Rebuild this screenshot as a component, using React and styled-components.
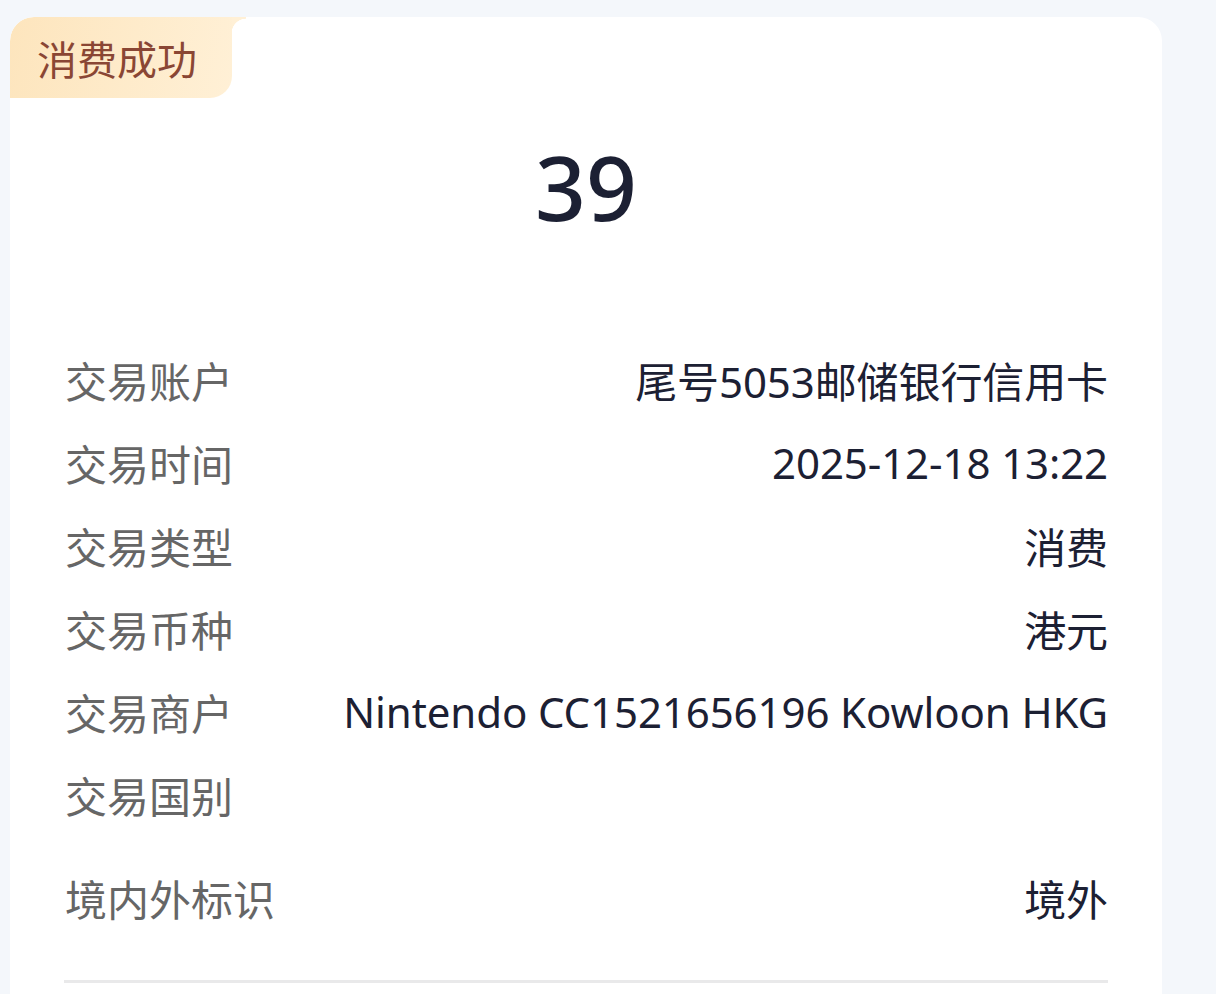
import React from "react";
import styled, { createGlobalStyle } from "styled-components";

const Global = createGlobalStyle`
  html, body { margin: 0; padding: 0; background: #f4f7fb; }
  body { font-family: "Noto Sans", "Noto Sans CJK SC", sans-serif; }
  #root { min-height: 994px; }
`;

const Page = styled.div`
  padding: 17px 54px 0 10px;
  height: 994px;
  overflow: hidden;
  box-sizing: border-box;
`;

const Card = styled.div`
  background: #ffffff;
  border-radius: 24px 24px 0 0;
  width: 1152px;
  height: 1100px;
  overflow: hidden;
  display: flex;
  flex-direction: column;
`;

const Badge = styled.div`
  position: relative;
  width: 222px;
  height: 81px;
  box-sizing: border-box;
  padding-left: 27px;
  display: flex;
  align-items: center;
  background: linear-gradient(100deg, #fde5bd 0%, #fff0d6 100%);
  border-radius: 24px 0 22px 0;
  color: #8a4634;
  font-family: "Noto Sans CJK SC", sans-serif;
  font-size: 40px;
  &::after {
    content: "";
    position: absolute;
    top: 0;
    right: -14px;
    width: 14px;
    height: 16px;
    background: radial-gradient(circle at 100% 100%, transparent 14px, #fff0d6 14.6px);
  }
`;

const Amount = styled.div`
  margin-top: 39px;
  text-align: center;
  font-family: "Noto Sans", sans-serif;
  font-size: 89px;
  font-weight: 500;
  line-height: 100px;
  color: #1c2033;
`;

const List = styled.div`
  margin-top: 101px;
  padding: 0 54px 0 55px;
  display: flex;
  flex-direction: column;
`;

const Row = styled.div`
  display: flex;
  justify-content: space-between;
  align-items: center;
  height: 83px;
  margin-top: ${(p) => (p.$gap ? `${p.$gap}px` : "0")};
`;

const Label = styled.span`
  font-family: "Noto Sans CJK SC", sans-serif;
  font-size: 42px;
  color: #666666;
`;

const Value = styled.span`
  font-family: "Noto Sans", "Noto Sans CJK SC", sans-serif;
  font-size: 42px;
  color: #1c2033;
  white-space: nowrap;
  letter-spacing: -0.1px;
`;

const Divider = styled.div`
  margin: 41px 54px 0;
  height: 3px;
  background: #e9e9ea;
`;

const rows = [
  ["交易账户", "尾号5053邮储银行信用卡"],
  ["交易时间", "2025-12-18 13:22"],
  ["交易类型", "消费"],
  ["交易币种", "港元"],
  ["交易商户", "Nintendo CC1521656196 Kowloon HKG"],
  ["交易国别", ""],
];

export default function App() {
  return (
    <>
      <Global />
      <Page>
        <Card>
          <Badge>消费成功</Badge>
          <Amount>39</Amount>
          <List>
            {rows.map(([l, v]) => (
              <Row key={l}>
                <Label>{l}</Label>
                <Value>{v}</Value>
              </Row>
            ))}
            <Row $gap={20}>
              <Label>境内外标识</Label>
              <Value>境外</Value>
            </Row>
          </List>
          <Divider />
        </Card>
      </Page>
    </>
  );
}
